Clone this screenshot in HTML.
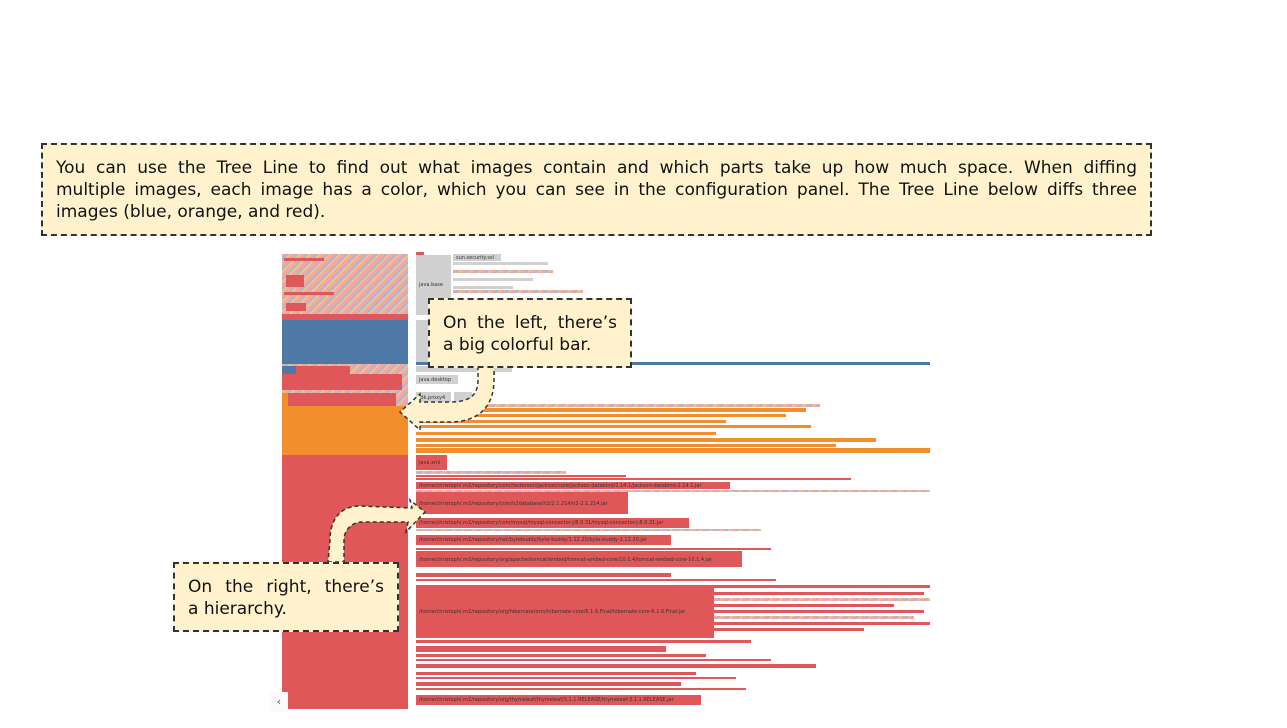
<!DOCTYPE html>
<html><head><meta charset="utf-8"><style>
body{margin:0;width:1287px;height:728px;background:#fff;position:relative;overflow:hidden;font-family:"DejaVu Sans","Liberation Sans",sans-serif}
.a{position:absolute}
.r{background:#e05759}.o{background:#f28e2b}.b{background:#4e79a7}.g{background:#d0d0d0}
.s{background:repeating-linear-gradient(135deg,#f4a6a0 0 3px,#aab8d0 3px 5px,#f4c090 5px 7px)}
.note{position:absolute;background:#fff2cc;border:2px dashed #333;color:#111;box-sizing:border-box}
.j{display:block;text-align:justify;text-align-last:justify;white-space:nowrap}
.lbl{position:absolute;font-size:5px;color:#333;white-space:nowrap;padding-left:3px}
</style></head><body>
<div class="note" style="left:41px;top:143px;width:1111px;height:93px;padding:12px 13px;font-size:17px;line-height:22px"><span class="j" style="white-space:normal">You can use the Tree Line to find out what images contain and which parts take up how much space. When diffing</span><span class="j" style="white-space:normal">multiple images, each image has a color, which you can see in the configuration panel. The Tree Line below diffs three</span><span style="display:block">images (blue, orange, and red).</span></div>

<!-- left bar -->
<div class="a s" style="left:282px;top:254px;width:126px;height:66px"></div>
<div class="a r" style="left:284px;top:258px;width:40px;height:3px"></div>
<div class="a r" style="left:286px;top:275px;width:18px;height:12px"></div>
<div class="a r" style="left:284px;top:292px;width:50px;height:3px"></div>
<div class="a r" style="left:286px;top:303px;width:20px;height:8px"></div>
<div class="a r" style="left:282px;top:314px;width:126px;height:6px"></div>
<div class="a b" style="left:282px;top:320px;width:126px;height:44px"></div>
<div class="a s" style="left:282px;top:364px;width:126px;height:42px"></div>
<div class="a r" style="left:282px;top:374px;width:120px;height:16px"></div>
<div class="a b" style="left:282px;top:366px;width:14px;height:8px"></div>
<div class="a r" style="left:296px;top:366px;width:54px;height:8px"></div>
<div class="a r" style="left:288px;top:393px;width:108px;height:13px"></div>
<div class="a o" style="left:282px;top:393px;width:6px;height:13px"></div>
<div class="a o" style="left:282px;top:406px;width:126px;height:49px"></div>
<div class="a r" style="left:282px;top:455px;width:126px;height:254px"></div>

<!-- right hierarchy top -->
<div class="a r" style="left:416px;top:252px;width:8px;height:3px"></div>
<div class="a g" style="left:416px;top:255px;width:35px;height:60px"></div>
<div class="lbl" style="left:416px;top:282px">java.base</div>
<div class="a g" style="left:453px;top:254px;width:48px;height:7px"></div>
<div class="lbl" style="left:453px;top:255px">sun.security.ssl</div>
<div class="a g" style="left:453px;top:262px;width:95px;height:3px"></div>
<div class="a s" style="left:453px;top:270px;width:100px;height:3px"></div>
<div class="a g" style="left:453px;top:278px;width:80px;height:3px"></div>
<div class="a g" style="left:453px;top:286px;width:60px;height:3px"></div>
<div class="a s" style="left:453px;top:290px;width:130px;height:3px"></div>
<div class="a g" style="left:416px;top:320px;width:12px;height:42px"></div>
<div class="a b" style="left:416px;top:362px;width:514px;height:3px"></div>
<div class="a g" style="left:416px;top:366px;width:96px;height:6px"></div>
<div class="a g" style="left:416px;top:375px;width:42px;height:9px"></div>
<div class="lbl" style="left:416px;top:377px">java.desktop</div>
<div class="a g" style="left:416px;top:392px;width:35px;height:12px"></div>
<div class="lbl" style="left:416px;top:395px">jdk.proxy4</div>
<div class="a g" style="left:454px;top:392px;width:18px;height:12px"></div>
<div class="a s" style="left:480px;top:404px;width:340px;height:3px"></div>
<div class="a o" style="left:416px;top:408px;width:390px;height:4px"></div>
<div class="a o" style="left:416px;top:414px;width:370px;height:3px"></div>
<div class="a o" style="left:416px;top:420px;width:310px;height:3px"></div>
<div class="a o" style="left:416px;top:425px;width:395px;height:3px"></div>
<div class="a o" style="left:416px;top:432px;width:300px;height:3px"></div>
<div class="a o" style="left:416px;top:438px;width:460px;height:4px"></div>
<div class="a o" style="left:416px;top:444px;width:420px;height:3px"></div>
<div class="a o" style="left:416px;top:448px;width:514px;height:5px"></div>
<div class="a r" style="left:416px;top:455px;width:31px;height:15px"></div>
<div class="lbl" style="left:416px;top:460px">java.xml</div>
<div class="a s" style="left:416px;top:471px;width:150px;height:3px"></div>
<div class="a r" style="left:416px;top:475px;width:210px;height:2px"></div>
<div class="a r" style="left:416px;top:478px;width:435px;height:2px"></div>
<div class="a r" style="left:416px;top:482px;width:314px;height:7px"></div>
<div class="lbl" style="left:416px;top:483px">/home/christoph/.m2/repository/com/fasterxml/jackson/core/jackson-databind/2.14.1/jackson-databind-2.14.1.jar</div>
<div class="a s" style="left:416px;top:490px;width:514px;height:2px"></div>
<div class="a r" style="left:416px;top:492px;width:212px;height:22px"></div>
<div class="lbl" style="left:416px;top:501px">/home/christoph/.m2/repository/com/h2database/h2/2.1.214/h2-2.1.214.jar</div>
<div class="a r" style="left:416px;top:518px;width:273px;height:10px"></div>
<div class="lbl" style="left:416px;top:520px">/home/christoph/.m2/repository/com/mysql/mysql-connector-j/8.0.31/mysql-connector-j-8.0.31.jar</div>
<div class="a s" style="left:416px;top:529px;width:345px;height:2px"></div>
<div class="a r" style="left:416px;top:535px;width:255px;height:10px"></div>
<div class="lbl" style="left:416px;top:537px">/home/christoph/.m2/repository/net/bytebuddy/byte-buddy/1.12.20/byte-buddy-1.12.20.jar</div>
<div class="a r" style="left:416px;top:548px;width:355px;height:2px"></div>
<div class="a r" style="left:416px;top:551px;width:326px;height:16px"></div>
<div class="lbl" style="left:416px;top:557px">/home/christoph/.m2/repository/org/apache/tomcat/embed/tomcat-embed-core/10.1.4/tomcat-embed-core-10.1.4.jar</div>
<div class="a r" style="left:416px;top:573px;width:255px;height:4px"></div>
<div class="a r" style="left:416px;top:579px;width:360px;height:2px"></div>
<div class="a r" style="left:416px;top:585px;width:298px;height:53px"></div>
<div class="lbl" style="left:416px;top:609px">/home/christoph/.m2/repository/org/hibernate/orm/hibernate-core/6.1.6.Final/hibernate-core-6.1.6.Final.jar</div>
<div class="a r" style="left:714px;top:585px;width:216px;height:3px"></div>
<div class="a r" style="left:714px;top:592px;width:210px;height:3px"></div>
<div class="a s" style="left:714px;top:598px;width:216px;height:3px"></div>
<div class="a r" style="left:714px;top:604px;width:180px;height:3px"></div>
<div class="a r" style="left:714px;top:610px;width:210px;height:3px"></div>
<div class="a s" style="left:714px;top:616px;width:200px;height:3px"></div>
<div class="a r" style="left:714px;top:622px;width:216px;height:3px"></div>
<div class="a r" style="left:714px;top:628px;width:150px;height:3px"></div>
<div class="a r" style="left:416px;top:640px;width:335px;height:3px"></div>
<div class="a r" style="left:416px;top:646px;width:250px;height:6px"></div>
<div class="a r" style="left:416px;top:654px;width:290px;height:3px"></div>
<div class="a r" style="left:416px;top:659px;width:355px;height:2px"></div>
<div class="a r" style="left:416px;top:664px;width:400px;height:4px"></div>
<div class="a r" style="left:416px;top:672px;width:280px;height:3px"></div>
<div class="a r" style="left:416px;top:677px;width:320px;height:2px"></div>
<div class="a r" style="left:416px;top:682px;width:265px;height:4px"></div>
<div class="a r" style="left:416px;top:688px;width:330px;height:2px"></div>
<div class="a r" style="left:416px;top:695px;width:285px;height:10px"></div>
<div class="lbl" style="left:416px;top:697px">/home/christoph/.m2/repository/org/thymeleaf/thymeleaf/3.1.1.RELEASE/thymeleaf-3.1.1.RELEASE.jar</div>
<div class="a" style="left:270px;top:692px;width:18px;height:20px;background:#fafafa;font-size:11px;color:#555;text-align:center;line-height:20px">‹</div>

<svg class="a" style="left:0;top:0" width="1287" height="728">
<path d="M478,366 L494,366 L494,380 C494,405 480,422 450,422 L420,422 L420,430 L400,412 L420,394 L420,402 L450,402 C470,402 478,395 478,380 Z" fill="#fff2cc" stroke="#333" stroke-width="1.5" stroke-dasharray="4,3"/>
<path d="M328,562 L344,562 L344,540 C344,530 352,522 362,522 L408,522 L406,532 L425,512 L410,500 L412,508 L360,506 C340,506 330,520 330,540 Z" fill="#fff2cc" stroke="#333" stroke-width="1.5" stroke-dasharray="4,3"/>
</svg>
<div class="note" style="left:428px;top:298px;width:204px;height:70px;padding:12px 13px;font-size:17px;line-height:22px"><span class="j">On the left, there’s</span><span style="display:block">a big colorful bar.</span></div>
<div class="note" style="left:173px;top:562px;width:226px;height:70px;padding:12px 13px;font-size:17px;line-height:22px"><span class="j">On the right, there’s</span><span style="display:block">a hierarchy.</span></div>
</body></html>
